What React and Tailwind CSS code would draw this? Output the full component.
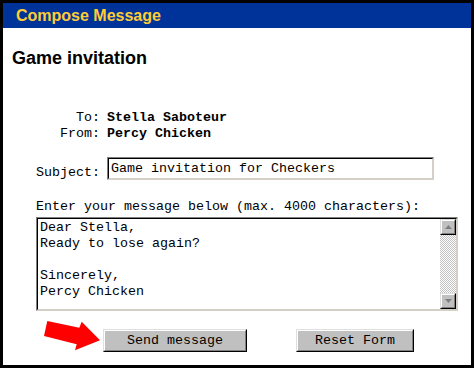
import React from "react";

const mono = "font-['Liberation_Mono','Courier_New',monospace] text-[13.33px] leading-[16px] text-black";

function ScrollBtn({ down }) {
  return (
    <div className="w-[16px] h-[16px] border border-t-[#dfdfdf] border-l-[#dfdfdf] border-b-black border-r-black">
      <div className="w-full h-full bg-[#c0c0c0] border border-t-white border-l-white border-b-[#808080] border-r-[#808080] flex items-center justify-center">
        <svg width="7" height="4" viewBox="0 0 7 4">
          {down ? (
            <polygon points="0,0 7,0 3.5,4" fill="#808080" />
          ) : (
            <polygon points="0,4 7,4 3.5,0" fill="#808080" />
          )}
        </svg>
      </div>
    </div>
  );
}

function Button({ w, children }) {
  return (
    <div className={`${w} h-[23px] border border-t-[#dfdfdf] border-l-[#dfdfdf] border-b-black border-r-black`}>
      <div className={`w-full h-full bg-[#c0c0c0] border border-t-white border-l-white border-b-[#808080] border-r-[#808080] flex items-center justify-center ${mono}`}>
        {children}
      </div>
    </div>
  );
}

export default function App() {
  return (
    <div className="w-[474px] h-[368px] border-[3px] border-black bg-white flex flex-col overflow-hidden">
      <div className="h-[25px] bg-[#003399] pl-[13px] font-['Liberation_Sans',Arial,sans-serif] font-bold text-[16px] leading-[25px] text-[#ffcc33]">
        Compose Message
      </div>
      <div className="pl-[9px] pt-[20px] font-['Liberation_Sans',Arial,sans-serif] font-bold text-[18px] leading-[21px] text-black">
        Game invitation
      </div>

      <div className={`mt-[41px] pl-[33px] flex flex-col ${mono}`}>
        <div className="flex gap-[7px]">
          <div className="w-[64px] text-right">To:</div>
          <div className="font-bold">Stella Saboteur</div>
        </div>
        <div className="flex gap-[7px]">
          <div className="w-[64px] text-right">From:</div>
          <div className="font-bold">Percy Chicken</div>
        </div>
      </div>

      <div className={`mt-[15px] pl-[33px] flex items-start gap-[7px] ${mono}`}>
        <div className="w-[64px] pt-[8px]">Subject:</div>
        <div className="w-[327px] h-[23px] border border-t-[#808080] border-l-[#808080] border-b-[#d4d0c8] border-r-[#d4d0c8]">
          <div className="w-full h-full bg-white border border-t-black border-l-black border-b-[#d4d0c8] border-r-[#d4d0c8] flex items-center pl-[2px]">
            Game invitation for Checkers
          </div>
        </div>
      </div>

      <div className={`mt-[18px] pl-[33px] ${mono}`}>
        Enter your message below (max. 4000 characters):
      </div>

      <div className="mt-[2px] ml-[33px] w-[422px] h-[94px] border border-t-[#808080] border-l-[#808080] border-b-[#d4d0c8] border-r-[#d4d0c8]">
        <div className="w-full h-full bg-white border border-t-black border-l-black border-b-[#d4d0c8] border-r-[#d4d0c8] flex">
          <div className={`flex-1 pl-[2px] pt-[1px] whitespace-pre ${mono}`}>
            {"Dear Stella,\nReady to lose again?\n\nSincerely,\nPercy Chicken"}
          </div>
          <div className="w-[16px] h-full flex flex-col">
            <ScrollBtn />
            <div className="flex-1 [background-image:repeating-conic-gradient(#c0c0c0_0%_25%,#ffffff_0%_50%)] [background-size:2px_2px]" />
            <ScrollBtn down />
          </div>
        </div>
      </div>

      <div className="mt-[18px] pl-[40px] flex items-start">
        <svg width="58" height="32" viewBox="0 0 58 32" className="-mt-[9px]">
          <polygon
            points="4.3,1 36.3,7.7 38.7,1.7 57,20.3 32,30.3 33.7,24.3 1,16"
            fill="#ff0000"
          />
        </svg>
        <div className="ml-[2px]">
          <Button w="w-[144px]">Send message</Button>
        </div>
        <div className="ml-[49px]">
          <Button w="w-[118px]">Reset Form</Button>
        </div>
      </div>
    </div>
  );
}
